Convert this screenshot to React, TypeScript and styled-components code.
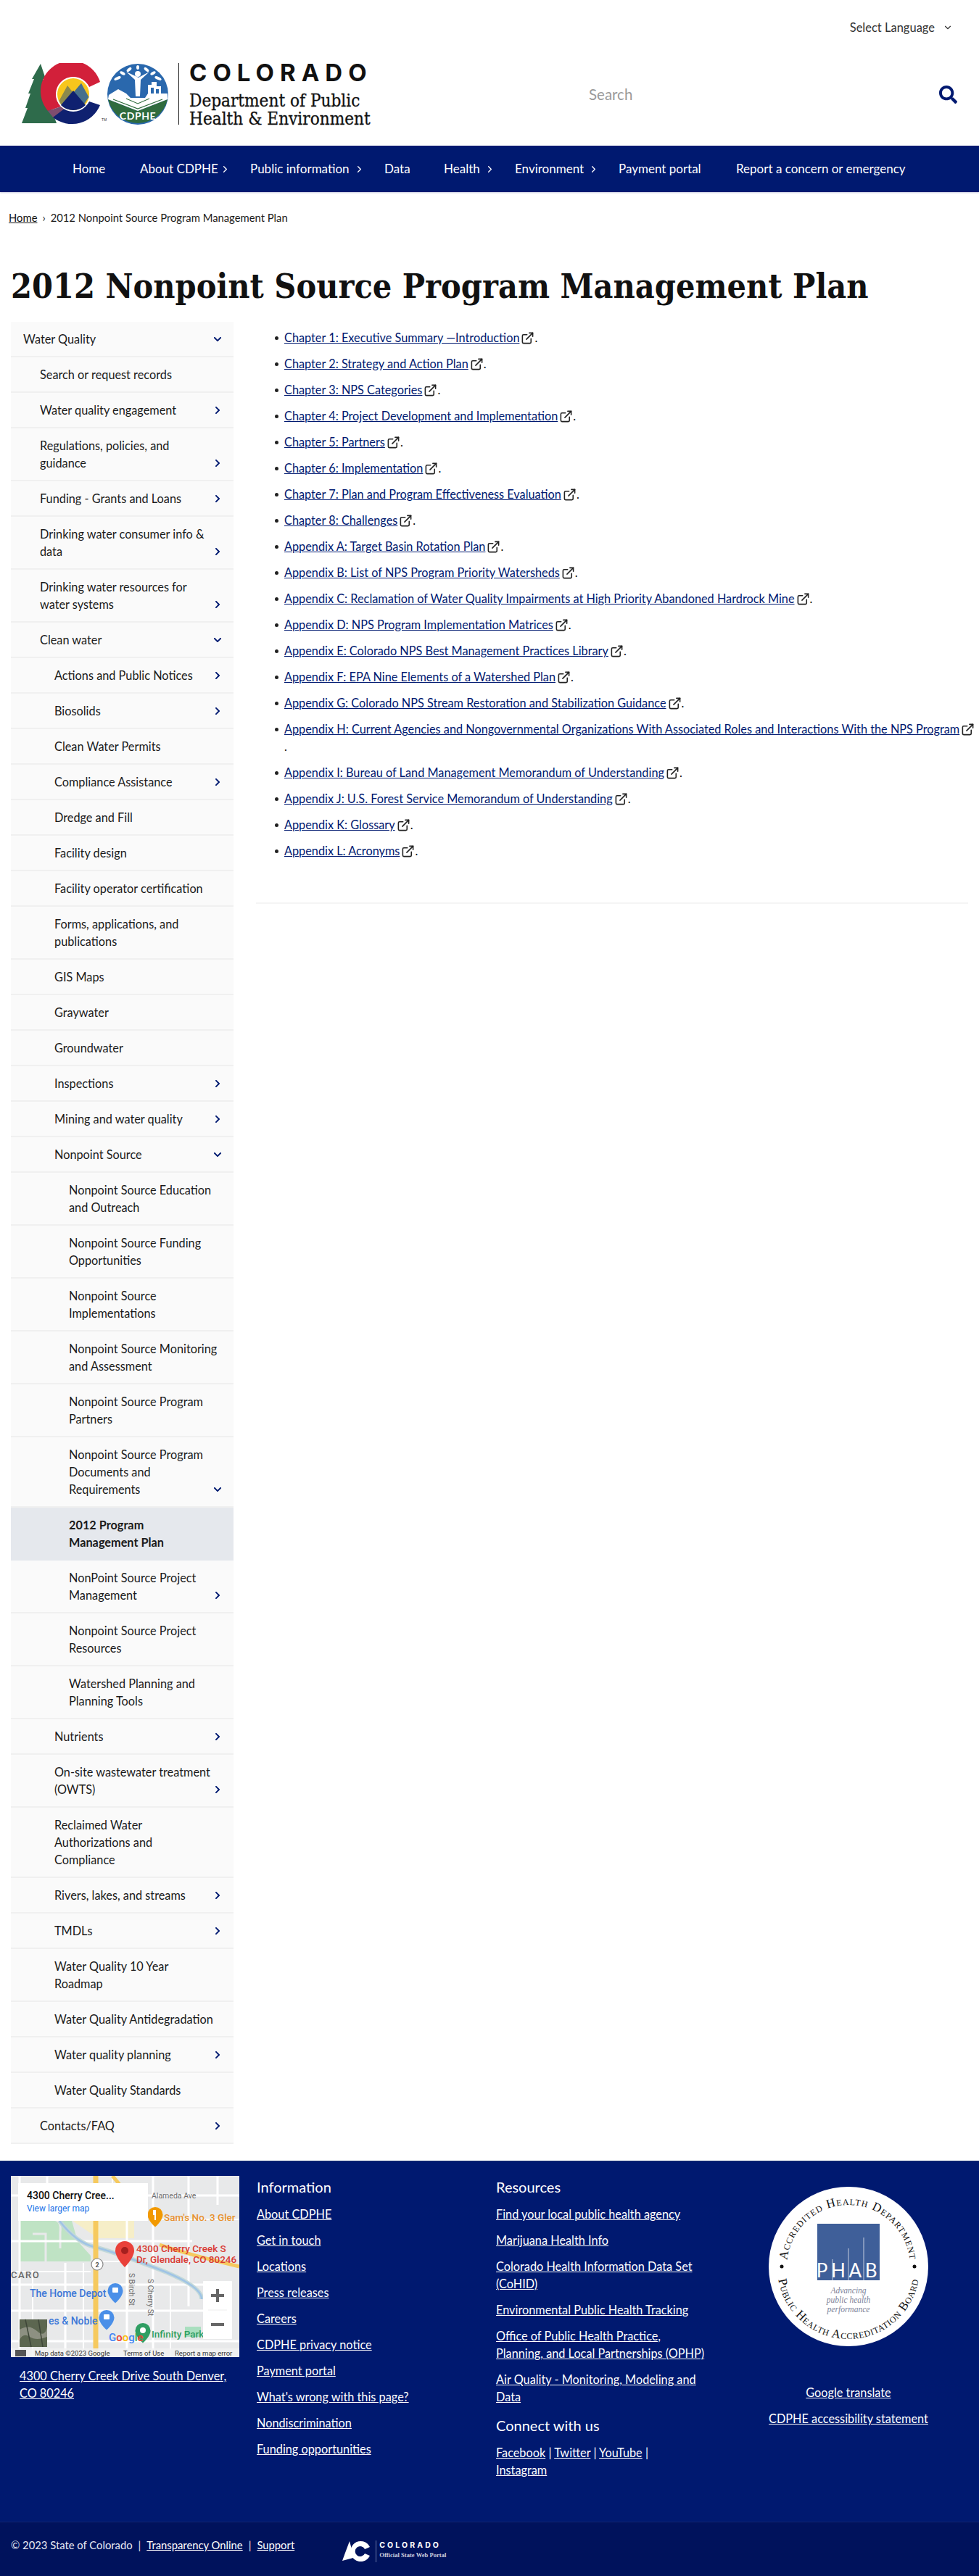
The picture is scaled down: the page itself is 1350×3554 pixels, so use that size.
import React from "react";
import styled, { createGlobalStyle } from "styled-components";
import { ChevronDown, ChevronRight, ExternalLink } from "lucide-react";
import { FaChevronDown, FaChevronRight, FaSearch } from "react-icons/fa";

const SANS = `"Lato", "Liberation Sans", sans-serif`;
const SLAB = `"DejaVu Serif", "Liberation Serif", serif`;
const NAVY = "#001970";

const Global = createGlobalStyle`
  html, body { margin: 0; padding: 0; background: #fff; }
  body { font-family: ${SANS}; font-size: 16.3px; line-height: 24px; color: #1b1b1b; }
  * { box-sizing: border-box; }
`;

const Page = styled.div`
  width: 1350px;
  overflow: hidden;
`;
const TopBar = styled.div`
  height: 75px;
  display: flex;
  justify-content: flex-end;
  align-items: flex-start;
  padding: 26px 36px 0 0;
  gap: 11px;
  color: #333;
  font-size: 16.5px;
  svg { margin-top: 5px; }
`;
const Header = styled.header`
  height: 126px;
  display: flex;
  align-items: flex-start;
  padding: 12px 30px 0 28px;
`;
const LogoText = styled.div`
  margin-left: 13px;
  padding-left: 14px;
  border-left: 1px solid #222;
  height: 85px;
  display: flex;
  flex-direction: column;
`;
const Wordmark = styled.div`
  font-family: "Inter", "Liberation Sans", sans-serif;
  font-weight: 700;
  font-size: 33px;
  line-height: 26px;
  letter-spacing: 8px;
  color: #111;
  margin-bottom: 14px;
`;
const DeptLine = styled.div`
  font-family: ${SLAB};
  font-stretch: condensed;
  font-weight: 400;
  -webkit-text-stroke: 0.3px #111;
  font-size: 24.1px;
  line-height: 25px;
  color: #111;
  white-space: nowrap;
`;
const SearchBox = styled.div`
  margin-left: auto;
  width: 508px;
  height: 36px;
  margin-top: 25px;
  display: flex;
  align-items: center;
  justify-content: space-between;
  color: #9a9a9a;
  font-size: 20.5px;
  svg { color: ${NAVY}; }
`;
const Nav = styled.nav`
  height: 64px;
  background: ${NAVY};
  display: flex;
  align-items: center;
  padding-left: 100px;
  color: #fff;
  box-shadow: 0 1px 2px rgba(0, 25, 112, 0.25);
`;
const NavItem = styled.div<{ $w: number }>`
  width: ${(p) => p.$w}px;
  display: flex;
  align-items: center;
  white-space: nowrap;
  font-size: 17px;
  svg { margin-left: auto; margin-right: 27px; }
`;
const Crumbs = styled.div`
  padding: 23px 12px 0;
  font-size: 14.8px;
  line-height: 24px;
  height: 105px;
  a { color: #111; text-decoration: underline; }
  span { margin: 0 7px; }
`;
const Title = styled.h1`
  margin: 0;
  padding: 0 15px;
  height: 74px;
  font-family: ${SLAB};
  font-stretch: condensed;
  font-weight: 700;
  font-size: 46.3px;
  line-height: 50px;
  color: #111;
  white-space: nowrap;
`;
const Main = styled.main`
  display: flex;
  align-items: flex-start;
  padding-left: 15px;
  margin-bottom: 23px;
`;
const Side = styled.aside`
  width: 307px;
  flex: none;
`;
const Row = styled.div<{ $level: number; $active?: boolean }>`
  display: flex;
  align-items: flex-end;
  justify-content: space-between;
  padding: 12px 14px 11px ${(p) => [17, 40, 60, 80][p.$level]}px;
  background: ${(p) => (p.$active ? "#e5e8ed" : "#fafafa")};
  border-bottom: 2px solid ${(p) => (p.$active ? "#e5e8ed" : "#f0f0f0")};
  font-weight: ${(p) => (p.$active ? 700 : 400)};
  color: #1b1b1b;
`;
const RowLabel = styled.div`
  flex: 1;
  white-space: pre;
`;
const RowIcon = styled.div`
  width: 16px;
  height: 24px;
  flex: none;
  display: flex;
  align-items: center;
  justify-content: center;
  color: ${NAVY};
`;
const Content = styled.section`
  flex: 1;
  min-width: 0;
  margin-left: 31px;
  margin-right: 15px;
  height: 803px;
  border-bottom: 2px solid #f5f5f5;
`;
const DocList = styled.ul`
  margin: 10px -12px 0 0;
  padding: 0 0 0 39px;
  list-style: none;
`;
const DocItem = styled.li`
  position: relative;
  margin-bottom: 12px;
  line-height: 24px;
  color: #111;
  &::before {
    content: "";
    position: absolute;
    left: -13px;
    top: 10px;
    width: 5px;
    height: 5px;
    border-radius: 50%;
    background: #222;
  }
  a { color: ${NAVY}; text-decoration: underline; }
  svg { color: #222; margin: 0 0 0 2px; vertical-align: -4px; }
`;
const Footer = styled.footer`
  background: ${NAVY};
  color: #fff;
  border-top: 1px solid #15306f;
`;
const FooterMain = styled.div`
  height: 497px;
  display: grid;
  grid-template-columns: 315px 306px 306px 1fr;
  column-gap: 24px;
  padding: 20px 15px 0;
`;
const FootLink = styled.a`
  display: block;
  color: #fff;
  text-decoration: underline;
  margin-bottom: 12px;
  white-space: pre;
`;
const FootHead = styled.h3`
  margin: 0 0 11px;
  font-size: 20px;
  font-weight: 400;
  line-height: 30px;
`;
const InlineLinks = styled.div`
  a { color: #fff; text-decoration: underline; }
`;
const MapFrame = styled.div`
  position: relative;
  width: 315px;
  height: 250px;
  overflow: hidden;
  svg { display: block; }
`;
const MapCard = styled.div`
  position: absolute;
  left: 10px;
  top: 10px;
  width: 179px;
  height: 52px;
  background: #fff;
  padding: 8px 12px;
  font-family: "Roboto", "Liberation Sans", sans-serif;
  strong { display: block; color: #111; font-size: 14px; line-height: 18px; font-weight: 500; }
  span { display: block; color: #1a73e8; font-size: 12px; line-height: 18px; }
`;
const Address = styled.div`
  padding: 14px 12px 0;
  white-space: pre;
  a { color: #fff; text-decoration: underline; }
`;
const RightCol = styled.div`
  padding-right: 9px;
  padding-top: 15px;
  display: flex;
  flex-direction: column;
  align-items: center;
  svg { display: block; margin-bottom: 52px; }
`;
const FooterBottom = styled.div`
  height: 75px;
  background: #00125c;
  border-top: 1px solid #12246e;
  padding: 19px 15px 0;
  display: flex;
  align-items: flex-start;
  font-size: 14.8px;
  color: #e8e8f2;
  a { color: #fff; text-decoration: underline; }
  span { margin: 0 8px; }
`;
const StateLogo = styled.div`
  margin-left: 66px;
  margin-top: 6px;
  display: flex;
  align-items: center;
  color: #fff;
`;

type Item = { t: string; l: number; c?: "r" | "d"; a?: boolean };
const items: Item[] = [
  { t: "Water Quality", l: 0, c: "d" },
  { t: "Search or request records", l: 1 },
  { t: "Water quality engagement", l: 1, c: "r" },
  { t: "Regulations, policies, and\nguidance", l: 1, c: "r" },
  { t: "Funding - Grants and Loans", l: 1, c: "r" },
  { t: "Drinking water consumer info &\ndata", l: 1, c: "r" },
  { t: "Drinking water resources for\nwater systems", l: 1, c: "r" },
  { t: "Clean water", l: 1, c: "d" },
  { t: "Actions and Public Notices", l: 2, c: "r" },
  { t: "Biosolids", l: 2, c: "r" },
  { t: "Clean Water Permits", l: 2 },
  { t: "Compliance Assistance", l: 2, c: "r" },
  { t: "Dredge and Fill", l: 2 },
  { t: "Facility design", l: 2 },
  { t: "Facility operator certification", l: 2 },
  { t: "Forms, applications, and\npublications", l: 2 },
  { t: "GIS Maps", l: 2 },
  { t: "Graywater", l: 2 },
  { t: "Groundwater", l: 2 },
  { t: "Inspections", l: 2, c: "r" },
  { t: "Mining and water quality", l: 2, c: "r" },
  { t: "Nonpoint Source", l: 2, c: "d" },
  { t: "Nonpoint Source Education\nand Outreach", l: 3 },
  { t: "Nonpoint Source Funding\nOpportunities", l: 3 },
  { t: "Nonpoint Source\nImplementations", l: 3 },
  { t: "Nonpoint Source Monitoring\nand Assessment", l: 3 },
  { t: "Nonpoint Source Program\nPartners", l: 3 },
  { t: "Nonpoint Source Program\nDocuments and\nRequirements", l: 3, c: "d" },
  { t: "2012 Program\nManagement Plan", l: 3, a: true },
  { t: "NonPoint Source Project\nManagement", l: 3, c: "r" },
  { t: "Nonpoint Source Project\nResources", l: 3 },
  { t: "Watershed Planning and\nPlanning Tools", l: 3 },
  { t: "Nutrients", l: 2, c: "r" },
  { t: "On-site wastewater treatment\n(OWTS)", l: 2, c: "r" },
  { t: "Reclaimed Water\nAuthorizations and\nCompliance", l: 2 },
  { t: "Rivers, lakes, and streams", l: 2, c: "r" },
  { t: "TMDLs", l: 2, c: "r" },
  { t: "Water Quality 10 Year\nRoadmap", l: 2 },
  { t: "Water Quality Antidegradation", l: 2 },
  { t: "Water quality planning", l: 2, c: "r" },
  { t: "Water Quality Standards", l: 2 },
  { t: "Contacts/FAQ", l: 1, c: "r" },
];

const docs = [
  "Chapter 1: Executive Summary —Introduction",
  "Chapter 2: Strategy and Action Plan",
  "Chapter 3: NPS Categories",
  "Chapter 4: Project Development and Implementation",
  "Chapter 5: Partners",
  "Chapter 6: Implementation",
  "Chapter 7: Plan and Program Effectiveness Evaluation",
  "Chapter 8: Challenges",
  "Appendix A: Target Basin Rotation Plan",
  "Appendix B: List of NPS Program Priority Watersheds",
  "Appendix C: Reclamation of Water Quality Impairments at High Priority Abandoned Hardrock Mine",
  "Appendix D: NPS Program Implementation Matrices",
  "Appendix E: Colorado NPS Best Management Practices Library",
  "Appendix F: EPA Nine Elements of a Watershed Plan",
  "Appendix G: Colorado NPS Stream Restoration and Stabilization Guidance",
  "Appendix H: Current Agencies and Nongovernmental Organizations With Associated Roles and Interactions With the NPS Program",
  "Appendix I: Bureau of Land Management Memorandum of Understanding",
  "Appendix J: U.S. Forest Service Memorandum of Understanding",
  "Appendix K: Glossary",
  "Appendix L: Acronyms",
];

const info = ["About CDPHE", "Get in touch", "Locations", "Press releases", "Careers", "CDPHE privacy notice", "Payment portal", "What's wrong with this page?", "Nondiscrimination", "Funding opportunities"];
const res = ["Find your local public health agency", "Marijuana Health Info", "Colorado Health Information Data Set\n(CoHID)", "Environmental Public Health Tracking", "Office of Public Health Practice,\nPlanning, and Local Partnerships (OPHP)", "Air Quality - Monitoring, Modeling and\nData"];

const Logo = () => (
  <svg width="205" height="88" viewBox="0 0 205 88">
    <polygon points="28,1 35,22 31,22 38,42 34,42 42,62 50,83 2,83 10,62 7,62 14,42 11,42 19,22 16,22" fill="#2e6b4b" />
    <path d="M110 26 A42 42 0 1 0 38 66 L56 60 A24 24 0 1 1 95 33 Z" fill="#d2203a" />
    <path d="M38 66 L56 60 L62 64 L46 76 Z" fill="#7d4d6f" />
    <path d="M110 58 A42 42 0 0 1 45 75 L62 62 A24 24 0 0 0 95 53 Z" fill="#0f2170" />
    <circle cx="73" cy="43" r="24" fill="#fff" />
    <circle cx="73" cy="43" r="22" fill="#f7c61c" />
    <path d="M53.5 52 L65 31 L73 41 L84 28 L93 47 Q88 64 73 65 Q58 64 53.5 52 Z" fill="#8c8a4d" />
    <path d="M73 41 L84 28 L94.5 47 L88 56 Z" fill="#47708c" />
    <path d="M56 58 L73 38 L90 58 Q83 65 73 65 Q63 65 56 58 Z" fill="#0f2170" />
    <text x="112" y="80" fontSize="5" fill="#333" fontFamily="Liberation Sans">TM</text>
    <circle cx="162" cy="43" r="42" fill="#2a68ad" />
    <path d="M121 50 L162 66 L203 50 A42 42 0 0 1 121 50 Z" fill="#2f6b3e" />
    <path d="M122 44 L135 36 L146 42 L152 48 L172 48 L176 42 L203 42 L203 50 L162 66 L121 50 Z" fill="#fff" />
    <path d="M176 42 V30 H181 V26 H188 V32 H194 V42 Z" fill="#fff" />
    <path d="M180 42 V34 H184 V42 M187 42 V36 H191 V42" fill="#2a68ad" />
    <path d="M128 50 L162 63 L196 50" fill="none" stroke="#2f6b3e" strokeWidth="1.2" />
    <path d="M146 49 L162 56 L178 49" fill="none" stroke="#2f6b3e" strokeWidth="1.1" />
    <circle cx="162" cy="15" r="4" fill="#fff" />
    <path d="M146 12 L158 23 L159 46 H165 L166 23 L178 12 L163 20 Z" fill="#fff" />
    <g fill="#fff">
      <ellipse cx="134" cy="21" rx="5" ry="2" transform="rotate(-25 134 21)" />
      <ellipse cx="141" cy="14" rx="4" ry="2" transform="rotate(30 141 14)" />
      <ellipse cx="150" cy="9" rx="4" ry="2" transform="rotate(-40 150 9)" />
      <ellipse cx="162" cy="6" rx="2" ry="3" />
      <ellipse cx="174" cy="9" rx="4" ry="2" transform="rotate(40 174 9)" />
      <ellipse cx="183" cy="14" rx="4" ry="2" transform="rotate(-30 183 14)" />
      <ellipse cx="190" cy="21" rx="5" ry="2" transform="rotate(25 190 21)" />
    </g>
    <text x="162" y="78" textAnchor="middle" fontSize="14" fontWeight="700" fill="#fff" fontFamily="Lato, sans-serif" letterSpacing="0.6">CDPHE</text>
  </svg>
);

const MapArt = () => (
  <svg width="315" height="250" viewBox="0 0 315 250" fontFamily="Roboto, Liberation Sans, sans-serif">
    <rect width="315" height="250" fill="#e8e9ea" />
    <path d="M12 48 H80 L92 90 L110 110 V118 H12 Z" fill="#bfe3c4" />
    <path d="M30 60 H60 Q70 62 68 78 V100 M30 80 H48 V118" fill="none" stroke="#e8e9ea" strokeWidth="3" />
    <path d="M85 62 H170 V86 H120 Z" fill="#f6eec8" />
    <g stroke="#fff" strokeWidth="3" fill="none">
      <path d="M0 27 H315 M0 90 H250 M0 150 H265 M0 186 H265 M0 228 H315" />
      <path d="M12 0 V250 M50 0 V40 M75 120 V250 M160 60 V250 M196 0 V250 M245 0 V180 M285 0 V40" />
      <path d="M0 132 H110 M125 118 H160 M205 60 H315" strokeWidth="2" />
      <path d="M30 130 V250 M100 120 V250 M220 150 V250 M140 0 V50" strokeWidth="2" />
    </g>
    <path d="M67 62 Q90 92 115 98 T202 128 T263 170" fill="none" stroke="#c3d9d9" strokeWidth="6" />
    <path d="M67 62 Q90 92 115 98 T202 128 T263 170" fill="none" stroke="#9fc3e6" strokeWidth="2.5" />
    <path d="M117 0 V250" stroke="#f6c95e" strokeWidth="7" />
    <path d="M140 0 L165 30 M205 95 Q250 110 315 125" stroke="#f6c95e" strokeWidth="5" fill="none" />
    <rect x="240" y="208" width="22" height="14" fill="#a9dfbf" />
    <rect x="0" y="238" width="315" height="12" fill="#f1f1f1" opacity="0.85" />
    <circle cx="119" cy="122" r="8" fill="#fff" stroke="#888" strokeWidth="1.2" />
    <text x="119" y="126" textAnchor="middle" fontSize="9" fill="#555" fontWeight="700">2</text>
    <text x="194" y="31" fontSize="10.5" fill="#6e6e6e">Alameda Ave</text>
    <text x="0" y="141" fontSize="13" fill="#666" fontWeight="500" letterSpacing="1.5">CARO</text>
    <text x="211" y="62" fontSize="13.5" fill="#e8912d" fontWeight="500">Sam's No. 3 Gler</text>
    <path d="M199 43 a10.5 10.5 0 0 1 10.5 10.5 c0 8 -10.5 17 -10.5 17 s-10.5 -9 -10.5 -17 a10.5 10.5 0 0 1 10.5 -10.5 Z" fill="#f29900" />
    <path d="M196 47 v7 h2 v7 h2 v-14 Z" fill="#fff" />
    <text x="173" y="105" fontSize="13.5" fill="#d93a34" fontWeight="500">4300 Cherry Creek S</text>
    <text x="173" y="120" fontSize="13.5" fill="#d93a34" fontWeight="500">Dr, Glendale, CO 80246</text>
    <path d="M157 90 a13 13 0 0 1 13 13 c0 10 -13 23 -13 23 s-13 -13 -13 -23 a13 13 0 0 1 13 -13 Z" fill="#e9413a" />
    <circle cx="157" cy="103" r="5" fill="#a5201e" />
    <text x="26" y="167" fontSize="14" fill="#3b78d8" fontWeight="500">The Home Depot</text>
    <path d="M144 148 a10.5 10.5 0 0 1 10.5 10.5 c0 8 -10.5 17 -10.5 17 s-10.5 -9 -10.5 -17 a10.5 10.5 0 0 1 10.5 -10.5 Z" fill="#4a8fe8" />
    <rect x="140" y="154" width="8" height="7" rx="1" fill="#fff" />
    <text x="52" y="205" fontSize="14" fill="#3b78d8" fontWeight="500">es &amp; Noble</text>
    <path d="M132 185 a10.5 10.5 0 0 1 10.5 10.5 c0 8 -10.5 17 -10.5 17 s-10.5 -9 -10.5 -17 a10.5 10.5 0 0 1 10.5 -10.5 Z" fill="#4a8fe8" />
    <rect x="128" y="191" width="8" height="7" rx="1" fill="#fff" />
    <text x="194" y="223" fontSize="13.5" fill="#2f9e62" fontWeight="500">Infinity Park</text>
    <path d="M182 203 a10.5 10.5 0 0 1 10.5 10.5 c0 8 -10.5 17 -10.5 17 s-10.5 -9 -10.5 -17 a10.5 10.5 0 0 1 10.5 -10.5 Z" fill="#2f9e62" />
    <circle cx="182" cy="213" r="4" fill="#fff" />
    <text x="135" y="228" fontSize="15" fontWeight="500">
      <tspan fill="#4285f4">G</tspan><tspan fill="#ea4335">o</tspan><tspan fill="#fbbc05">o</tspan><tspan fill="#4285f4">g</tspan><tspan fill="#34a853">l</tspan><tspan fill="#ea4335">e</tspan>
    </text>
    <text transform="translate(163 134) rotate(90)" fontSize="10.5" fill="#6e6e6e">S Birch St</text>
    <text transform="translate(189 142) rotate(90)" fontSize="10.5" fill="#6e6e6e">S Cherry St</text>
    <rect x="12" y="198" width="38" height="38" fill="#5c6650" />
    <path d="M12 212 Q25 204 36 214 T50 208 V222 Q35 228 26 222 T12 226 Z" fill="#8d9082" />
    <path d="M20 198 L28 236 M38 198 L44 236" stroke="#3e4638" strokeWidth="1.5" />
    <rect x="265" y="145" width="40" height="80" rx="1" fill="#fff" />
    <path d="M276 165 h18 M285 156 v18" stroke="#666" strokeWidth="4" />
    <path d="M276 205 h18" stroke="#666" strokeWidth="4" />
    <path d="M272 185 H298" stroke="#eee" strokeWidth="1" />
    <rect x="6" y="240" width="15" height="9" fill="#555" />
    <text x="33" y="248" fontSize="9.5" fill="#333">Map data ©2023 Google</text>
    <text x="155" y="248" fontSize="9.5" fill="#333">Terms of Use</text>
    <text x="226" y="248" fontSize="9.5" fill="#333">Report a map error</text>
  </svg>
);

const Phab = () => (
  <svg width="220" height="220" viewBox="0 0 220 220">
    <defs>
      <path id="phabTop" d="M25 110 A85 85 0 0 1 195 110" />
      <path id="phabBottom" d="M12 112 A98 98 0 0 0 208 112" />
    </defs>
    <circle cx="110" cy="110" r="110" fill="#fff" />
    <text fontFamily="Liberation Serif, serif" fontSize="17" fill="#111" letterSpacing="1" style={{ fontVariant: "small-caps" }}>
      <textPath href="#phabTop" startOffset="50%" textAnchor="middle">Accredited Health Department</textPath>
    </text>
    <text fontFamily="Liberation Serif, serif" fontSize="17" fill="#111" letterSpacing="0.7" style={{ fontVariant: "small-caps" }}>
      <textPath href="#phabBottom" startOffset="50%" textAnchor="middle">Public Health Accreditation Board</textPath>
    </text>
    <circle cx="18" cy="110" r="2.5" fill="#111" />
    <circle cx="201" cy="110" r="2.5" fill="#111" />
    <rect x="67" y="51" width="86" height="78" fill="#3f5f99" />
    <path d="M88 100 V129 M110 85 V129 M131 70 V129" stroke="#fff" strokeWidth="0.7" />
    <text x="110" y="125" textAnchor="middle" fontFamily="Lato, sans-serif" fontSize="26" fill="#fff" letterSpacing="4.6">PHAB</text>
    <g fontFamily="Liberation Serif, serif" fontStyle="italic" fontSize="11.5" fill="#7c8298" textAnchor="middle">
      <text x="110" y="147">Advancing</text>
      <text x="110" y="160">public health</text>
      <text x="110" y="173">performance</text>
    </g>
  </svg>
);

const SmallC = () => (
  <svg width="42" height="30" viewBox="0 0 42 30" style={{ marginRight: 4 }}>
    <path d="M10 1 L13 12 L15 24 L0 28 L4 17 Z" fill="#fff" />
    <path d="M38 9 A14 14 0 1 0 38 21 L31 18 A7 7 0 1 1 31 12 Z" fill="#fff" />
    <circle cx="25" cy="15" r="6" fill="none" stroke="#00125c" strokeWidth="1" />
  </svg>
);
const StateText = styled.div`
  border-left: 1px solid #6a78a8;
  padding-left: 4px;
  height: 30px;
`;
const StateWord = styled.div`
  font-family: "Inter", sans-serif;
  font-weight: 700;
  font-size: 10.5px;
  line-height: 14px;
  letter-spacing: 3.1px;
`;
const StateSub = styled.div`
  font-family: "Liberation Serif", serif;
  font-weight: 700;
  font-size: 8.6px;
  line-height: 12px;
  color: #ccd;
`;

export default function App() {
  return (
    <Page>
      <Global />
      <TopBar>
        Select Language
        <ChevronDown size={14} strokeWidth={2} />
      </TopBar>
      <Header>
        <Logo />
        <LogoText>
          <Wordmark>COLORADO</Wordmark>
          <DeptLine>Department of Public</DeptLine>
          <DeptLine>Health &amp; Environment</DeptLine>
        </LogoText>
        <SearchBox>
          Search
          <FaSearch size={25} />
        </SearchBox>
      </Header>
      <Nav>
        <NavItem $w={93}>Home</NavItem>
        <NavItem $w={152}>About CDPHE<ChevronRight size={15} /></NavItem>
        <NavItem $w={185}>Public information<ChevronRight size={15} /></NavItem>
        <NavItem $w={82}>Data</NavItem>
        <NavItem $w={98}>Health<ChevronRight size={15} /></NavItem>
        <NavItem $w={143}>Environment<ChevronRight size={15} /></NavItem>
        <NavItem $w={162}>Payment portal</NavItem>
        <NavItem $w={240}>Report a concern or emergency</NavItem>
      </Nav>
      <Crumbs>
        <a href="#">Home</a>
        <span>›</span>2012 Nonpoint Source Program Management Plan
      </Crumbs>
      <Title>2012 Nonpoint Source Program Management Plan</Title>
      <Main>
        <Side>
          {items.map((i) => (
            <Row key={i.t} $level={i.l} $active={i.a}>
              <RowLabel>{i.t}</RowLabel>
              <RowIcon>
                {i.c === "r" && <FaChevronRight size={12} />}
                {i.c === "d" && <FaChevronDown size={12} />}
              </RowIcon>
            </Row>
          ))}
        </Side>
        <Content>
          <DocList>
            {docs.map((d) => (
              <DocItem key={d}>
                <a href="#">{d}</a>
                <ExternalLink size={19} strokeWidth={2} />
                {d.startsWith("Appendix H") && <br />}.
              </DocItem>
            ))}
          </DocList>
        </Content>
      </Main>
      <Footer>
        <FooterMain>
          <div>
            <MapFrame>
              <MapArt />
              <MapCard>
                <strong>4300 Cherry Cree...</strong>
                <span>View larger map</span>
              </MapCard>
            </MapFrame>
            <Address><a href="#">{"4300 Cherry Creek Drive South Denver,\nCO 80246"}</a></Address>
          </div>
          <div>
            <FootHead>Information</FootHead>
            {info.map((t) => <FootLink href="#" key={t}>{t}</FootLink>)}
          </div>
          <div>
            <FootHead>Resources</FootHead>
            {res.map((t) => <FootLink href="#" key={t}>{t}</FootLink>)}
            <FootHead>Connect with us</FootHead>
            <InlineLinks>
              <a href="#">Facebook</a> | <a href="#">Twitter</a> | <a href="#">YouTube</a> |<br />
              <a href="#">Instagram</a>
            </InlineLinks>
          </div>
          <RightCol>
            <Phab />
            <FootLink href="#">Google translate</FootLink>
            <FootLink href="#">CDPHE accessibility statement</FootLink>
          </RightCol>
        </FooterMain>
        <FooterBottom>
          © 2023 State of Colorado<span>|</span><a href="#">Transparency Online</a><span>|</span><a href="#">Support</a>
          <StateLogo>
            <SmallC />
            <StateText>
              <StateWord>COLORADO</StateWord>
              <StateSub>Official State Web Portal</StateSub>
            </StateText>
          </StateLogo>
        </FooterBottom>
      </Footer>
    </Page>
  );
}
